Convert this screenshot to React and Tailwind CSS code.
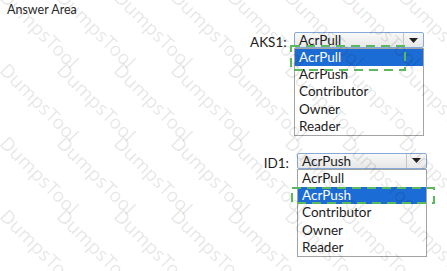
import React from "react";

const OPTIONS = ["AcrPull", "AcrPush", "Contributor", "Owner", "Reader"];

function Caret() {
  return (
    <svg width="9" height="5" viewBox="0 0 9 5">
      <path d="M0 0 L9 0 L4.5 5 Z" fill="#222" />
    </svg>
  );
}

function DropGroup({ label, value, selected, labelClass }) {
  return (
    <div className="flex items-start">
      <div className={labelClass}>{label}</div>
      <div className="flex flex-col w-[130px]">
        <div className="h-[16px] flex items-stretch border border-[#86a9d6] rounded-[2px] bg-gradient-to-b from-[#f9f9f9] to-[#e7e7e7]">
          <div className="flex-1 pl-[4px] leading-[15px] text-[13.5px] text-[#1c1c1c]">{value}</div>
          <div className="w-[20px] border-l border-[#c4c4c4] flex items-center justify-center">
            <Caret />
          </div>
        </div>
        <div className="border border-[#a3a3a3] bg-white">
          {OPTIONS.map((o) => (
            <div
              key={o}
              className={
                o === selected
                  ? "h-[17.2px] leading-[17.2px] pl-[4px] text-[13.5px] bg-[#1b6cd5] text-white"
                  : "h-[17.2px] leading-[17.2px] pl-[4px] text-[13.5px] text-[#1c1c1c]"
              }
            >
              {o}
            </div>
          ))}
        </div>
      </div>
    </div>
  );
}

function Watermarks() {
  const items = [];
  const rows = [-15, 58, 131, 204];
  for (let j = 0; j < rows.length; j++) {
    for (let i = 0; i < 8; i++) {
      items.push({ x: 12 + 57 * i, y: rows[j], k: `${i}-${j}` });
    }
  }
  return (
    <div className="absolute inset-0 pointer-events-none">
      {items.map((p) => (
        <span
          key={p.k}
          className="absolute whitespace-nowrap font-['Noto_Sans',sans-serif] text-[19px] leading-[24px] origin-top-left rotate-45 text-[rgba(0,0,0,0.1)]"
          style={{ left: p.x, top: p.y }}
        >
          DumpsTool
        </span>
      ))}
    </div>
  );
}

export default function App() {
  return (
    <div className="relative w-[447px] h-[271px] bg-white overflow-hidden font-['Lato',sans-serif]">
      <div className="h-[20px] pl-[7px] pt-[1px] text-[12.5px] leading-[18px] text-[#2a2a2a]">Answer Area</div>
      <div className="mt-[12px] pl-[250px] flex flex-col gap-[17px]">
        <DropGroup
          label="AKS1:"
          value="AcrPull"
          selected="AcrPull"
          labelClass="w-[44px] text-right pr-[8px] leading-[20px] text-[13.5px] text-[#1c1c1c]"
        />
        <DropGroup
          label="ID1:"
          value="AcrPush"
          selected="AcrPush"
          labelClass="w-[47px] text-right pr-[8px] leading-[20px] text-[13.5px] text-[#1c1c1c]"
        />
      </div>
      <Watermarks />
      <svg className="absolute left-[290px] top-[45px]" width="116" height="26">
        <rect x="1" y="1" width="114" height="24" fill="none" stroke="#5cb85c" strokeWidth="2" strokeDasharray="9 6" />
      </svg>
      <svg className="absolute left-[291px] top-[187px]" width="144" height="17">
        <rect x="1" y="1" width="142" height="15" fill="none" stroke="#5cb85c" strokeWidth="2" strokeDasharray="9 6" />
      </svg>
    </div>
  );
}
